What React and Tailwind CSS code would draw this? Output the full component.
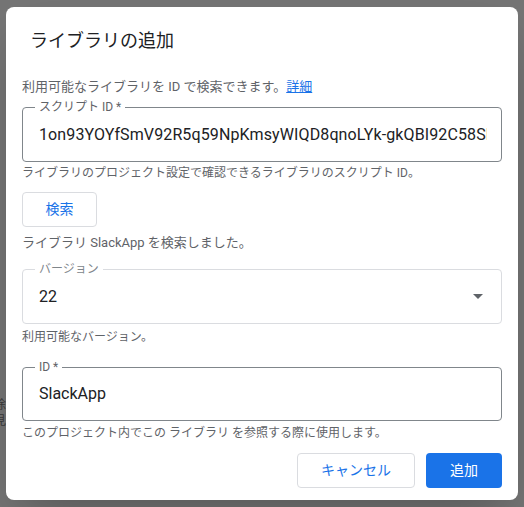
import React from "react";

const font = { fontFamily: 'Roboto, "Noto Sans CJK JP", "Noto Sans", sans-serif' };

function Outlined({ label, children, light, right, className, inner }) {
  return (
    <div
      className={`relative h-[55px] rounded border ${light ? "border-[#dadce0]" : "border-[#80868b]"} flex items-center pl-4 pr-[13px] ${className || ""}`}
    >
      <span
        className={`absolute -top-[9px] left-[12px] bg-white px-1 text-[12px] leading-4 ${light ? "text-[#80868b]" : "text-[#5f6368]"}`}
      >
        {label}
      </span>
      <div className={`flex-1 min-w-0 overflow-hidden whitespace-nowrap text-[16px] text-[#202124] ${inner || ""}`}>
        {children}
      </div>
      {right}
    </div>
  );
}

export default function App() {
  return (
    <div style={font} className="relative w-[524px] h-[507px] bg-[#757575] overflow-hidden pt-[7px] pl-[6px]">
      <span className="absolute left-[-6px] top-[397px] text-[12px] leading-4 text-[#3a3a3a]">除</span>
      <span className="absolute left-[-6px] top-[413px] text-[12px] leading-4 text-[#3a3a3a]">見</span>
      <div className="relative w-[512px] h-[493px] bg-white rounded-lg shadow-2xl px-4 pt-[22px]">
        <div className="pl-2 text-[18px] leading-6 text-[#202124]">ライブラリの追加</div>
        <div className="mt-[26px] text-[13px] leading-4 text-[#5f6368]">
          利用可能なライブラリを ID で検索できます。
          <span className="text-[#1a73e8] underline">詳細</span>
        </div>
        <Outlined label="スクリプト ID *" className="mt-3 !pr-[14px]" inner="tracking-[0.12px]">
          1on93YOYfSmV92R5q59NpKmsyWIQD8qnoLYk-gkQBI92C58SPyA2x1-bq
        </Outlined>
        <div className="mt-[3px] text-[12px] leading-4 text-[#5f6368]">
          ライブラリのプロジェクト設定で確認できるライブラリのスクリプト ID。
        </div>
        <button className="mt-[11px] block w-[75px] h-[35px] rounded border border-[#dadce0] bg-white text-[14px] text-[#1a73e8]">
          検索
        </button>
        <div className="mt-2 text-[13px] leading-4 text-[#5f6368]">
          ライブラリ SlackApp を検索しました。
        </div>
        <Outlined
          label="バージョン"
          light
          className="mt-[18px]"
          right={
            <svg width="10" height="5" viewBox="0 0 10 5" className="mr-[5px]">
              <path d="M0 0 L10 0 L5 5 Z" fill="#5f6368" />
            </svg>
          }
        >
          22
        </Outlined>
        <div className="mt-[5px] text-[12px] leading-4 text-[#5f6368]">利用可能なバージョン。</div>
        <Outlined label="ID *" className="mt-[22px] !h-[54px]">
          SlackApp
        </Outlined>
        <div className="mt-1 text-[12px] leading-4 text-[#5f6368]">
          このプロジェクト内でこの ライブラリ を参照する際に使用します。
        </div>
        <div className="mt-3 flex justify-end gap-[11px]">
          <button className="w-[118px] h-[35px] rounded border border-[#dadce0] bg-white text-[14px] text-[#1a73e8]">
            キャンセル
          </button>
          <button className="w-[76px] h-[35px] rounded bg-[#1a73e8] text-[14px] text-white">追加</button>
        </div>
      </div>
    </div>
  );
}
